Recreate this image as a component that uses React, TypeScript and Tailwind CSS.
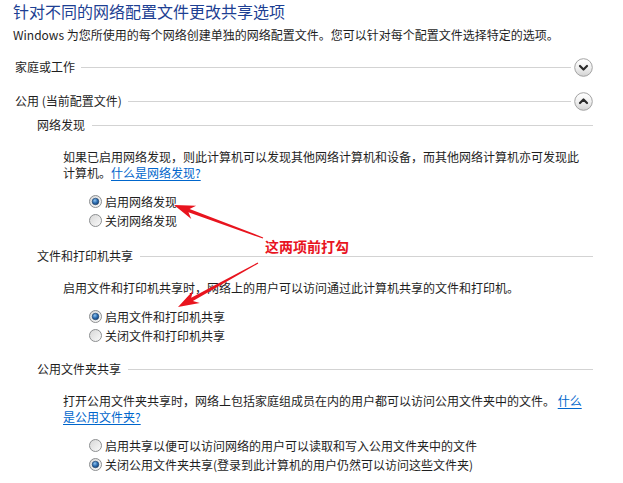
import { useId } from 'react'

const font = "font-['Noto_Sans_CJK_SC','Noto_Sans',sans-serif]"

function Radio({ checked }: { checked?: boolean }) {
  const id = useId().replace(/:/g, '')
  return (
    <svg width="13" height="13" viewBox="0 0 13 13" className="shrink-0">
      <defs>
        <linearGradient id={`bg${id}`} x1="0" y1="0" x2="1" y2="1">
          <stop offset="0" stopColor="#d6d6d6" />
          <stop offset="1" stopColor="#fbfbfb" />
        </linearGradient>
        <radialGradient id={`dot${id}`} cx="0.4" cy="0.35" r="0.7">
          <stop offset="0" stopColor="#8fc3ee" />
          <stop offset="0.55" stopColor="#2a6bb0" />
          <stop offset="1" stopColor="#173f6e" />
        </radialGradient>
      </defs>
      <circle cx="6.5" cy="6.5" r="6" fill={`url(#bg${id})`} stroke="#8c8e90" strokeWidth="1" />
      {checked && <circle cx="6.5" cy="6.5" r="3.3" fill={`url(#dot${id})`} stroke="#1d3e66" strokeWidth="0.6" />}
    </svg>
  )
}

function ChevronButton({ up }: { up?: boolean }) {
  const id = useId().replace(/:/g, '')
  return (
    <svg width="19" height="19" viewBox="0 0 19 19" className="shrink-0">
      <defs>
        <linearGradient id={`cb${id}`} x1="0" y1="0" x2="0" y2="1">
          <stop offset="0" stopColor="#ffffff" />
          <stop offset="0.5" stopColor="#f1f1f1" />
          <stop offset="1" stopColor="#d2d2d2" />
        </linearGradient>
      </defs>
      <circle cx="9.5" cy="9.5" r="8.8" fill={`url(#cb${id})`} stroke="#a3a3a3" strokeWidth="1" />
      <path
        d={up ? 'M6 11 L9.5 7.5 L13 11' : 'M6 8 L9.5 11.5 L13 8'}
        fill="none"
        stroke="#2a2a2a"
        strokeWidth="2.2"
        strokeLinecap="round"
        strokeLinejoin="round"
      />
    </svg>
  )
}

function arrowPoints(tx: number, ty: number, px: number, py: number) {
  const dx = px - tx
  const dy = py - ty
  const len = Math.sqrt(dx * dx + dy * dy)
  const ux = dx / len
  const uy = dy / len
  const nx = -uy
  const ny = ux
  const bx = px - 21 * ux
  const by = py - 21 * uy
  const cx = px - 16 * ux
  const cy = py - 16 * uy
  const pts = [
    [tx + 0.6 * nx, ty + 0.6 * ny],
    [cx + 1.8 * nx, cy + 1.8 * ny],
    [bx + 7 * nx, by + 7 * ny],
    [px, py],
    [bx - 7 * nx, by - 7 * ny],
    [cx - 1.8 * nx, cy - 1.8 * ny],
    [tx - 0.6 * nx, ty - 0.6 * ny],
  ]
  return pts.map(p => p.map(v => v.toFixed(1)).join(',')).join(' ')
}

function TopRow({ label, up }: { label: string; up?: boolean }) {
  return (
    <div className="flex items-center h-[24px] pl-[15px] pr-[30px]">
      <span className="leading-[24px]">{label}</span>
      <div className="flex-1 h-px bg-[#d3d3d3] ml-[6px] mr-[3px]" />
      <ChevronButton up={up} />
    </div>
  )
}

function SectionRow({ label }: { label: string }) {
  return (
    <div className="flex items-center h-[20px] pl-[37px] pr-[30px]">
      <span className="leading-[20px]">{label}</span>
      <div className="flex-1 h-px bg-[#d3d3d3] ml-[7px]" />
    </div>
  )
}

function Option({ label, checked }: { label: string; checked?: boolean }) {
  return (
    <div className="flex items-center h-[19px] pl-[89px] gap-[3px]">
      <Radio checked={checked} />
      <span className="leading-[19px] whitespace-nowrap">{label}</span>
    </div>
  )
}

const linkCls = 'text-[#0066cc] underline underline-offset-2'

export default function App() {
  return (
    <div className={`${font} relative w-[623px] h-[483px] overflow-hidden bg-white text-[12px] text-[#1e1e1e]`}>
      <h1 className="pl-[13px] h-[22px] text-[16px] leading-[22px] font-normal text-[#1d3f93] whitespace-nowrap">
        针对不同的网络配置文件更改共享选项
      </h1>
      <p className="mt-[3px] pl-[13px] h-[20px] leading-[20px] whitespace-nowrap">
        Windows 为您所使用的每个网络创建单独的网络配置文件。您可以针对每个配置文件选择特定的选项。
      </p>

      <div className="mt-[10px]">
        <TopRow label="家庭或工作" />
      </div>
      <div className="mt-[10px]">
        <TopRow label="公用 (当前配置文件)" up />
      </div>

      <div className="mt-[2px]">
        <SectionRow label="网络发现" />
      </div>
      <p className="mt-[14px] pl-[63px] leading-[16px] whitespace-nowrap">
        如果已启用网络发现，则此计算机可以发现其他网络计算机和设备，而其他网络计算机亦可发现此
        <br />
        计算机。<span className={linkCls}>什么是网络发现?</span>
      </p>
      <div className="mt-[11px]">
        <Option label="启用网络发现" checked />
        <Option label="关闭网络发现" />
      </div>

      <div className="mt-[16px]">
        <SectionRow label="文件和打印机共享" />
      </div>
      <p className="mt-[14px] pl-[63px] leading-[16px] whitespace-nowrap">
        启用文件和打印机共享时，网络上的用户可以访问通过此计算机共享的文件和打印机。
      </p>
      <div className="mt-[11px]">
        <Option label="启用文件和打印机共享" checked />
        <Option label="关闭文件和打印机共享" />
      </div>

      <div className="mt-[14px]">
        <SectionRow label="公用文件夹共享" />
      </div>
      <p className="mt-[14px] pl-[63px] leading-[16px] whitespace-nowrap">
        打开公用文件夹共享时，网络上包括家庭组成员在内的用户都可以访问公用文件夹中的文件。 <span className={linkCls}>什么</span>
        <br />
        <span className={linkCls}>是公用文件夹?</span>
      </p>
      <div className="mt-[11px]">
        <Option label="启用共享以便可以访问网络的用户可以读取和写入公用文件夹中的文件" />
        <Option label="关闭公用文件夹共享(登录到此计算机的用户仍然可以访问这些文件夹)" checked />
      </div>

      {/* annotation overlay */}
      <svg className="absolute left-0 top-0 pointer-events-none" width="623" height="483">
        <polygon points={arrowPoints(263, 238, 174, 205)} fill="#e8141e" />
        <polygon points={arrowPoints(258, 263, 178, 307)} fill="#e8141e" />
      </svg>
      <div className="absolute left-[265px] top-[237px] text-[14px] leading-[18px] font-bold text-[#e8141e] whitespace-nowrap">
        这两项前打勾
      </div>
    </div>
  )
}
